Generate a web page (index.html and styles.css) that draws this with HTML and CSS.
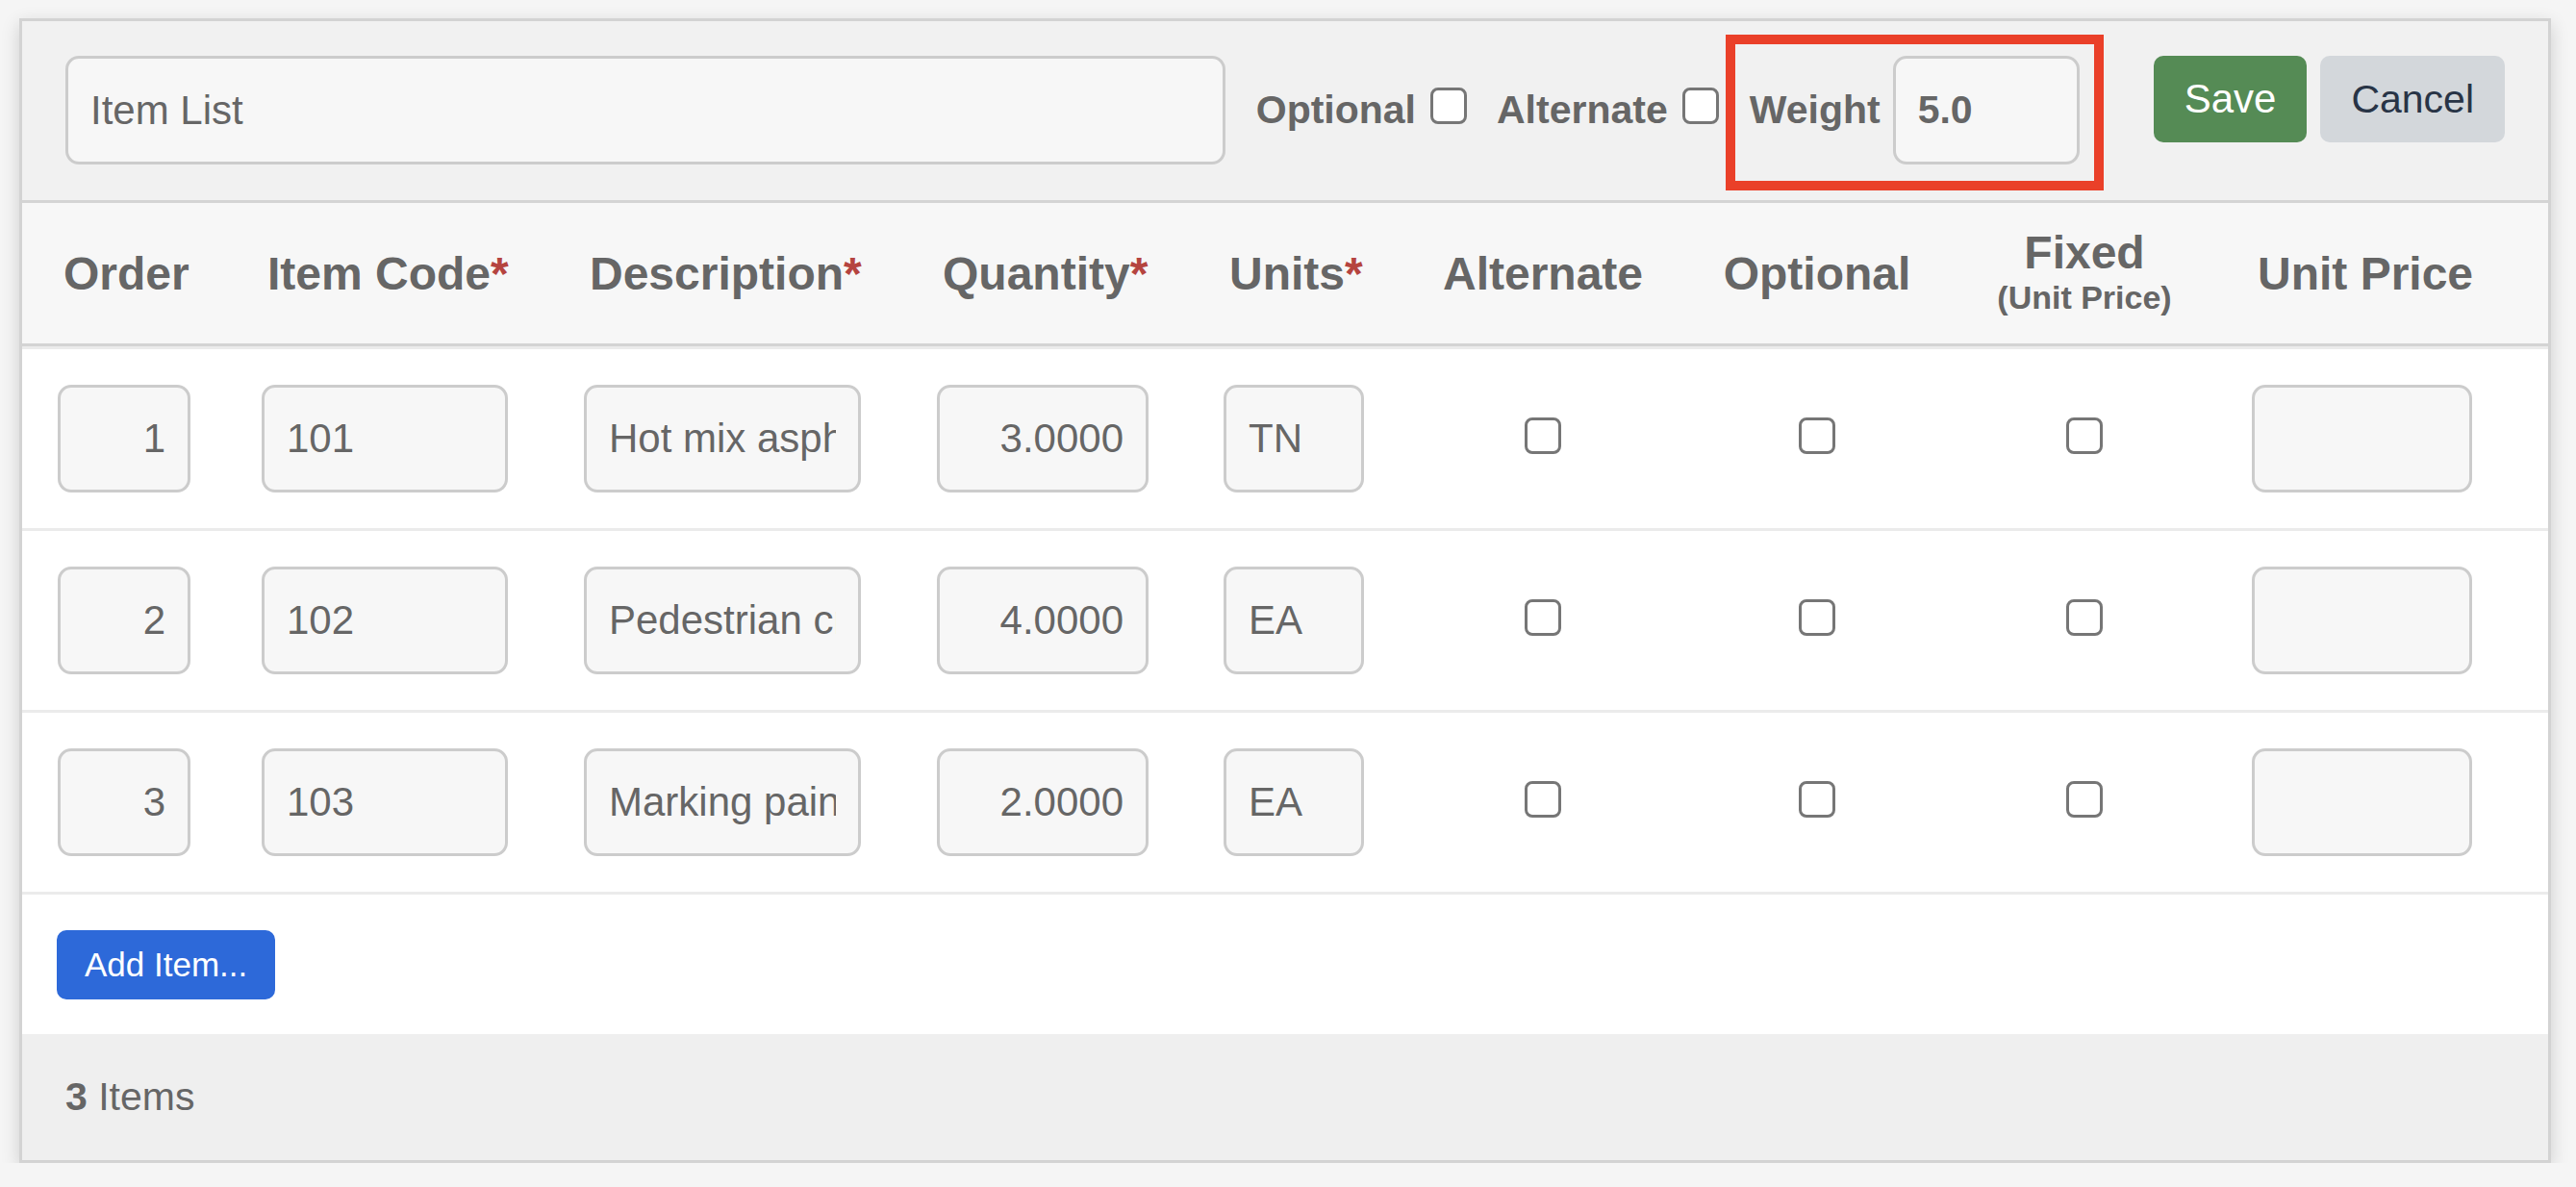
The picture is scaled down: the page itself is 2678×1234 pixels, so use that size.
FILE: index.html
```html
<!DOCTYPE html>
<html lang="en">
<head>
<meta charset="utf-8">
<title>Item List</title>
<link rel="stylesheet" href="styles.css">
</head>
<body>
<div class="card">
  <div class="toolbar">
    <input class="field title-field" type="text" value="Item List">
    <div class="flags">
      <label class="flag">Optional<input class="check" type="checkbox"></label>
      <label class="flag">Alternate<input class="check" type="checkbox"></label>
    </div>
    <div class="weight">
      <span class="weight-label">Weight</span>
      <input class="field weight-field" type="text" value="5.0">
    </div>
    <div class="actions">
      <button class="btn btn-save" type="button">Save</button>
      <button class="btn btn-cancel" type="button">Cancel</button>
    </div>
  </div>

  <table class="items">
    <colgroup>
      <col class="c-order">
      <col class="c-code">
      <col class="c-desc">
      <col class="c-qty">
      <col class="c-units">
      <col class="c-alt">
      <col class="c-opt">
      <col class="c-fixed">
      <col class="c-price">
    </colgroup>
    <thead>
      <tr>
        <th>Order</th>
        <th>Item Code<span class="req">*</span></th>
        <th>Description<span class="req">*</span></th>
        <th>Quantity<span class="req">*</span></th>
        <th>Units<span class="req">*</span></th>
        <th class="center">Alternate</th>
        <th class="center">Optional</th>
        <th class="center"><span class="fixed-main">Fixed</span><span class="fixed-sub">(Unit Price)</span></th>
        <th>Unit Price</th>
      </tr>
    </thead>
    <tbody>
      <tr>
        <td><input class="field w-order num" type="text" value="1"></td>
        <td><input class="field w-code" type="text" value="101"></td>
        <td><input class="field w-desc" type="text" value="Hot mix asphalt"></td>
        <td><input class="field w-qty num" type="text" value="3.0000"></td>
        <td><input class="field w-units" type="text" value="TN"></td>
        <td class="center"><input class="check" type="checkbox"></td>
        <td class="center"><input class="check" type="checkbox"></td>
        <td class="center"><input class="check" type="checkbox"></td>
        <td><input class="field w-price" type="text" value=""></td>
      </tr>
      <tr>
        <td><input class="field w-order num" type="text" value="2"></td>
        <td><input class="field w-code" type="text" value="102"></td>
        <td><input class="field w-desc" type="text" value="Pedestrian crossing"></td>
        <td><input class="field w-qty num" type="text" value="4.0000"></td>
        <td><input class="field w-units" type="text" value="EA"></td>
        <td class="center"><input class="check" type="checkbox"></td>
        <td class="center"><input class="check" type="checkbox"></td>
        <td class="center"><input class="check" type="checkbox"></td>
        <td><input class="field w-price" type="text" value=""></td>
      </tr>
      <tr>
        <td><input class="field w-order num" type="text" value="3"></td>
        <td><input class="field w-code" type="text" value="103"></td>
        <td><input class="field w-desc" type="text" value="Marking paint"></td>
        <td><input class="field w-qty num" type="text" value="2.0000"></td>
        <td><input class="field w-units" type="text" value="EA"></td>
        <td class="center"><input class="check" type="checkbox"></td>
        <td class="center"><input class="check" type="checkbox"></td>
        <td class="center"><input class="check" type="checkbox"></td>
        <td><input class="field w-price" type="text" value=""></td>
      </tr>
    </tbody>
  </table>

  <div class="add-row">
    <button class="btn btn-add" type="button">Add Item...</button>
  </div>

  <div class="footer"><strong>3</strong>&nbsp;Items</div>
</div>
</body>
</html>
```

FILE: styles.css
```css
* {
  box-sizing: border-box;
}

html, body {
  margin: 0;
  background: #f5f5f5;
}

body {
  padding: 19px 0 0 20px;
  font-family: "Liberation Sans", Arial, Helvetica, sans-serif;
  color: #666666;
}

.card {
  width: 2632px;
  border: 3px solid #d3d3d3;
  background: #ffffff;
  box-shadow: 0 6px 18px rgba(0, 0, 0, 0.16);
}

/* ---------- toolbar ---------- */
.toolbar {
  box-sizing: content-box;
  height: 150px;
  padding: 36px 45px 0 45px;
  display: flex;
  align-items: flex-start;
  background: #f1f1f1;
  border-bottom: 3px solid #d4d4d4;
}

.field {
  display: block;
  height: 112px;
  padding: 0 23px;
  border: 3px solid #cccccc;
  border-radius: 14px;
  background: #f7f7f7;
  font-family: "Liberation Sans", Arial, Helvetica, sans-serif;
  font-size: 42px;
  color: #666666;
  outline: none;
}

.title-field {
  width: 1208px;
  height: 113px;
}

.flags {
  display: flex;
  align-items: center;
  height: 113px;
  margin-left: 32px;
}

.flag {
  display: flex;
  align-items: center;
  font-size: 41px;
  font-weight: bold;
  color: #666666;
}

.flag + .flag {
  margin-left: 31px;
}

.flag .check {
  margin: 0 0 10px 15px;
}

.check {
  -webkit-appearance: none;
  appearance: none;
  display: block;
  width: 38px;
  height: 38px;
  margin: 0;
  border: 3px solid #767676;
  border-radius: 8px;
  background: #ffffff;
}

.weight {
  position: relative;
  display: flex;
  align-items: center;
  height: 113px;
  margin-left: 32px;
}

.weight::after {
  content: "";
  position: absolute;
  left: -25px;
  right: -25px;
  top: -22px;
  bottom: -27px;
  border: 10px solid #ea4029;
  pointer-events: none;
}

.weight-label {
  font-size: 41px;
  font-weight: bold;
  color: #666666;
}

.weight-field {
  width: 194px;
  height: 113px;
  margin-left: 13px;
  font-size: 41px;
  font-weight: bold;
}

.actions {
  display: flex;
  margin-left: 77px;
}

.btn {
  height: 90px;
  padding: 0 32px;
  border: none;
  border-radius: 10px;
  font-family: "Liberation Sans", Arial, Helvetica, sans-serif;
  font-size: 41px;
  cursor: pointer;
}

.btn-save {
  background: #558b55;
  color: #ffffff;
  font-size: 42px;
}

.btn-cancel {
  margin-left: 14px;
  background: #d3d7db;
  color: #283446;
}

/* ---------- table ---------- */
.items {
  width: 100%;
  border-collapse: separate;
  border-spacing: 0;
  table-layout: fixed;
}

.c-order { width: 212px; }
.c-code  { width: 335px; }
.c-desc  { width: 367px; }
.c-qty   { width: 298px; }
.c-units { width: 225px; }
.c-alt   { width: 288px; }
.c-opt   { width: 282px; }
.c-fixed { width: 274px; }
.c-price { width: 345px; }

.items th {
  height: 149px;
  padding: 0 0 0 43px;
  background: #f7f7f7;
  border-bottom: 3px solid #d4d4d4;
  text-align: left;
  vertical-align: middle;
  font-size: 48px;
  font-weight: bold;
  color: #666666;
  white-space: nowrap;
}

.items th.center {
  padding: 0;
  text-align: center;
}

.req {
  color: #b5443f;
}

.fixed-main {
  display: block;
  line-height: 50px;
}

.fixed-sub {
  display: block;
  font-size: 34px;
  line-height: 43px;
}

.items td {
  padding: 37px 0 37px 37px;
  border-bottom: 3px solid #ebebeb;
  vertical-align: middle;
}

.items tbody tr:first-child td {
  border-top: 3px solid #ebebeb;
}

.items td.center {
  padding-left: 0;
}

.items td.center .check {
  margin: -6px auto 0 auto;
}

.num {
  text-align: right;
}

.w-order { width: 138px; }
.w-code  { width: 256px; }
.w-desc  { width: 288px; }
.w-qty   { width: 220px; }
.w-units { width: 146px; }
.w-price { width: 229px; }

/* ---------- add + footer ---------- */
.add-row {
  padding: 37px 36px 36px 36px;
}

.btn-add {
  height: 72px;
  padding: 0 29px;
  background: #2d69d9;
  color: #ffffff;
  font-size: 35px;
}

.footer {
  display: flex;
  align-items: center;
  height: 131px;
  padding-left: 45px;
  background: #efefef;
  font-size: 41px;
  color: #666666;
}

.footer strong {
  font-weight: bold;
}
```
